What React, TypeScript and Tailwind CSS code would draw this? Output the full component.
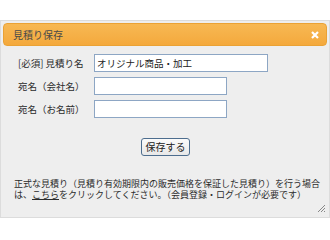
import React from "react";

const font = { fontFamily: '"Noto Sans CJK JP", "Noto Sans", sans-serif' };
const paraFont = { fontFamily: '"Liberation Sans", "Noto Sans CJK JP", sans-serif' };

export default function App() {
  return (
    <div className="w-[330px] h-[240px] bg-white pt-[20px]" style={font}>
      <div className="relative h-[198px] w-[330px] bg-[#eeeeee] border border-[#dcdcdc] p-[2px] text-[9.5px] leading-[10px] text-[#2b2b2b]">
        <div className="flex items-center justify-between h-[23px] rounded-[4px] border border-[#eaa235] bg-gradient-to-b from-[#f7b853] to-[#f4a93c] pl-[9px] pr-[7px]">
          <span className="text-[10px] text-[#4a4a4a]">見積り保存</span>
          <svg width="8" height="8" viewBox="0 0 8 8">
            <path d="M1 1L7 7M7 1L1 7" stroke="#fff" strokeWidth="2.2" />
          </svg>
        </div>
        <div className="flex flex-col gap-[5px] pl-[15px] pt-[8px]">
          <div className="flex items-center h-[18px]">
            <span className="w-[76px]">[必須] 見積り名</span>
            <div className="w-[174px] h-[18px] border border-[#8da6c4] bg-white pl-[2px] flex items-center text-[#222]">
              オリジナル商品・加工
            </div>
          </div>
          <div className="flex items-center h-[18px]">
            <span className="w-[76px]">宛名（会社名）</span>
            <div className="w-[133px] h-[18px] border border-[#8da6c4] bg-white" />
          </div>
          <div className="flex items-center h-[18px]">
            <span className="w-[76px]">宛名（お名前）</span>
            <div className="w-[133px] h-[18px] border border-[#8da6c4] bg-white" />
          </div>
        </div>
        <div className="flex justify-center mt-[20px] pl-[1px]">
          <div className="w-[49px] h-[18px] rounded-[3px] border border-[#4d6d8e] bg-gradient-to-b from-[#fbfbfb] to-[#e8e8e8] flex items-center justify-center text-[10px] text-[#222]">
            保存する
          </div>
        </div>
        <div className="mt-[23px] pl-[11px] pr-[6px] text-[9px] leading-[11px] text-[#2b2b2b] flex flex-col" style={paraFont}>
          <div className="whitespace-nowrap">正式な見積り（見積り有効期限内の販売価格を保証した見積り）を行う場合</div>
          <div className="whitespace-nowrap">
            は、<span className="underline">こちら</span>をクリックしてください。（会員登録・ログインが必要です）
          </div>
        </div>
        <svg className="absolute right-[3px] bottom-[4px]" width="9" height="9" viewBox="0 0 9 9">
          <path d="M8 1L1 8M8 4L4 8M8 7L7 8" stroke="#888" strokeWidth="1" />
        </svg>
      </div>
    </div>
  );
}
